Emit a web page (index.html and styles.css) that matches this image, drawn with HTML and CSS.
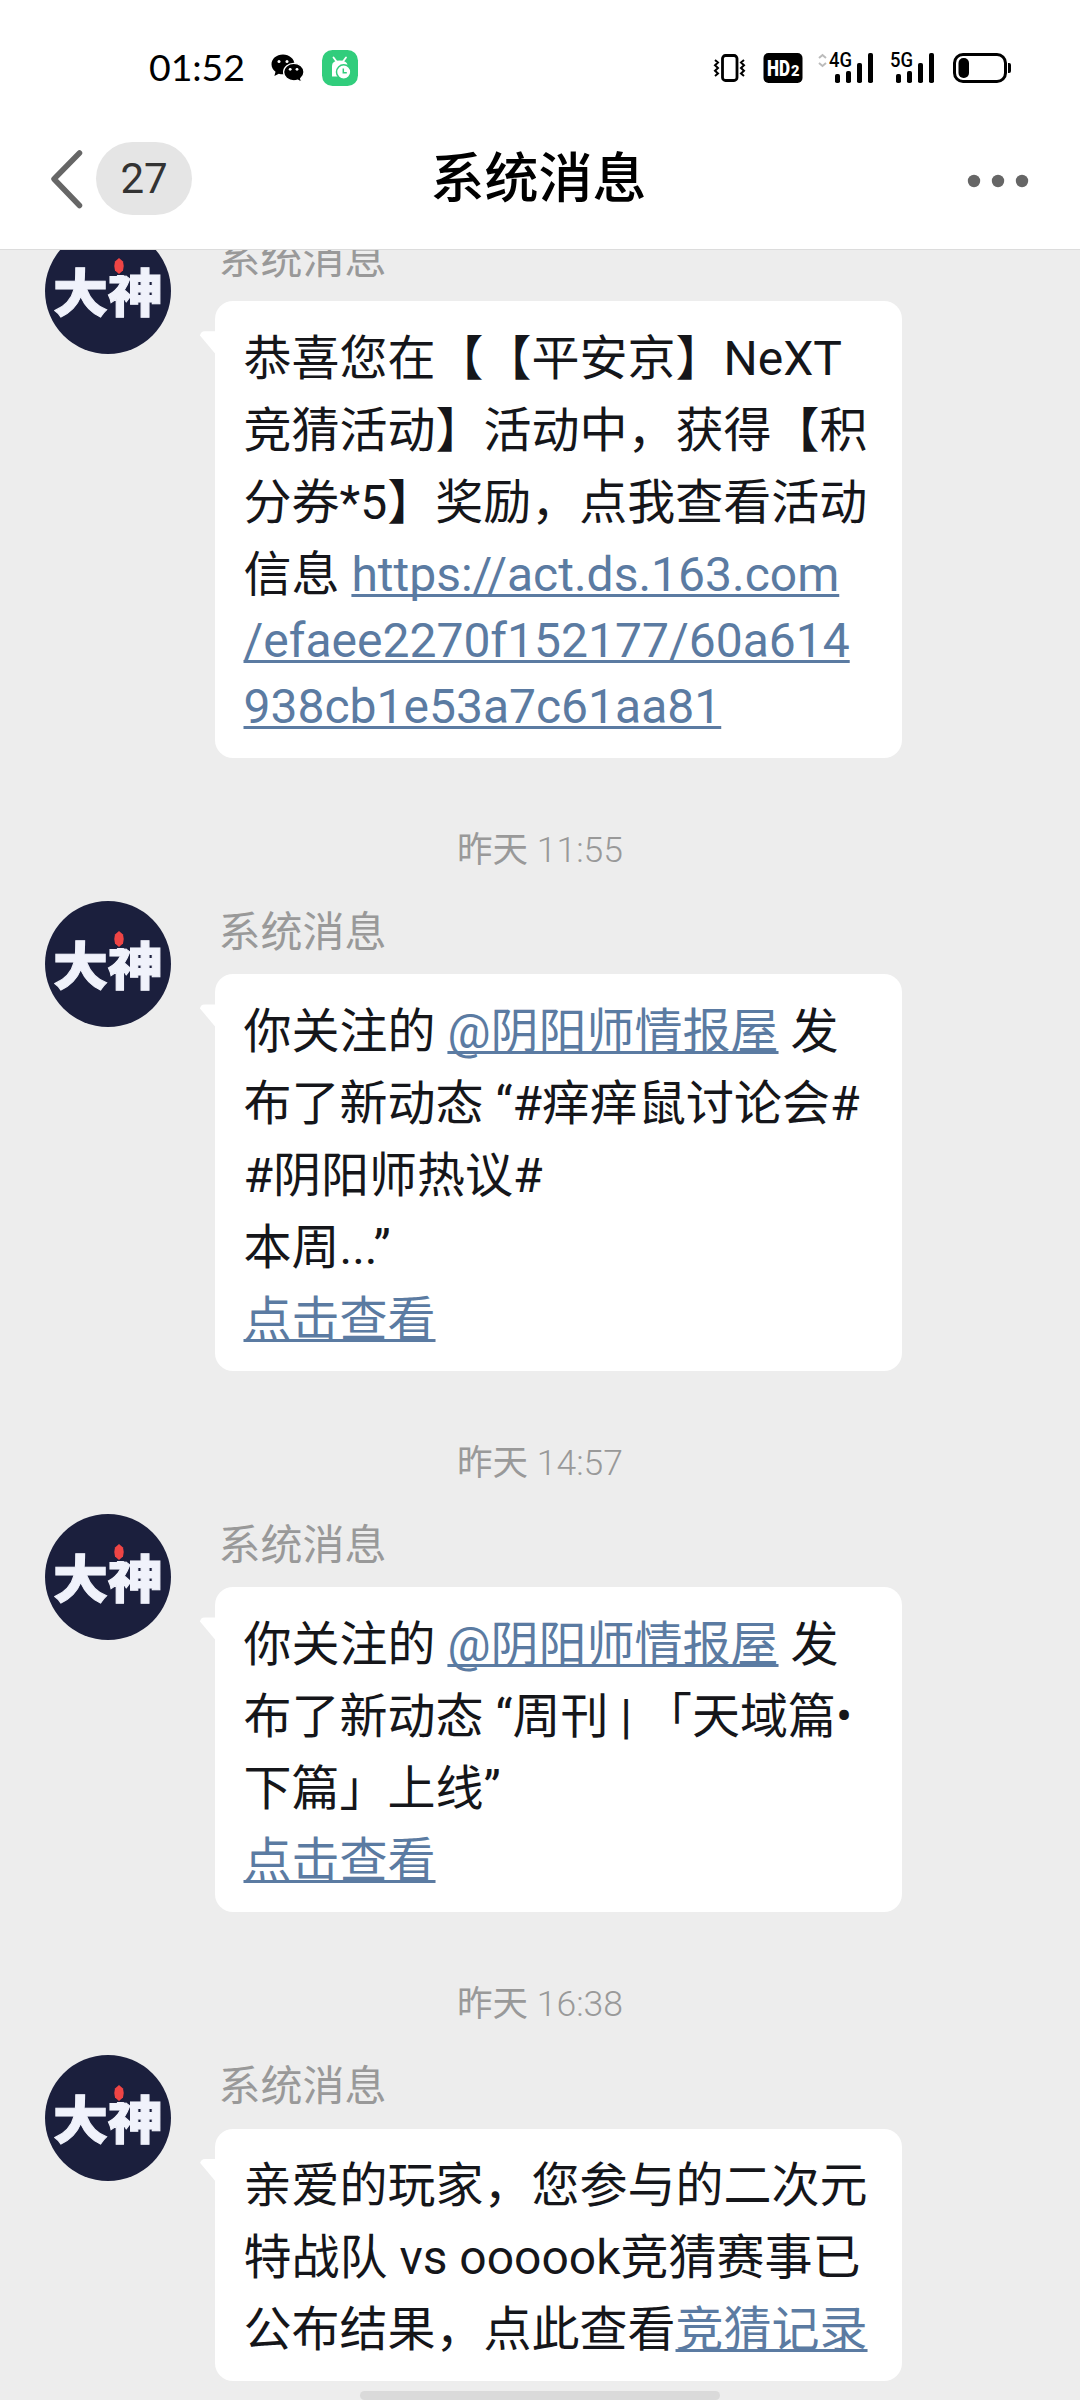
FILE: index.html
```html
<!DOCTYPE html>
<html lang="zh-CN">
<head>
<meta charset="utf-8">
<title>系统消息</title>
<link rel="stylesheet" href="styles.css">
</head>
<body>
<div class="screen">
  <header class="top">
    <div class="status">
      <div class="status-left">
        <span class="clock">01:52</span>
        <svg class="wechat" width="34" height="29" viewBox="0 0 34 29">
          <path d="M12 .5C5.500.500.500 4.800.500 10.300c0 3 1.600 5.700 4 7.500L3.400 22l4.400-2.300c1.300.4 2.700.6 4.200.6 6.300 0 11.500-4.400 11.500-9.900S18.300.500 12 .500z"/>
          <path d="M22.800 9.300c5.600 0 10.200 3.900 10.200 8.800 0 2.600-1.300 4.900-3.300 6.500l.8 3.600-3.700-2c-1.200.4-2.600.6-4 .6-5.600 0-10.200-3.900-10.200-8.700s4.600-8.800 10.200-8.800z" stroke="#fff" stroke-width="1.300"/>
          <g fill="#fff"><circle cx="8" cy="7.600" r="1.500"/><circle cx="16" cy="7.600" r="1.500"/><circle cx="19.200" cy="15.300" r="1.400"/><circle cx="26" cy="15.300" r="1.400"/></g>
        </svg>
        <svg class="droid" width="36" height="36" viewBox="0 0 36 36">
          <rect width="36" height="36" rx="10.500" fill="#31cd7c"/>
          <path d="M11.500 7.500l3 4M24 7.500l-3 4" stroke="#fff" stroke-width="1.800" stroke-linecap="round"/>
          <path d="M10 26.500V16q0-5.500 7.800-5.500T25.500 16v10.500z" fill="#fff"/>
          <circle cx="21.700" cy="22" r="7.200" fill="#fff" stroke="#31cd7c" stroke-width="1.500"/>
          <path d="M21.300 18.500v4.200h3.500" fill="none" stroke="#31cd7c" stroke-width="1.500"/>
        </svg>
      </div>
      <div class="status-right">
        <svg width="34" height="32" viewBox="0 0 34 32" fill="none" stroke="#000">
          <rect x="9.500" y="3.500" width="14.500" height="25" rx="3" stroke-width="2.800"/>
          <path d="M2 8l3 2.500-3 2.800 3 2.700-3 2.700 3 2.800-3 2.500M31 8l-3 2.500 3 2.800-3 2.700 3 2.700-3 2.800 3 2.500" stroke-width="2"/>
        </svg>
        <svg class="hd" width="40" height="32" viewBox="0 0 40 32">
          <rect x=".500" y="1" width="39" height="30" rx="5"/>
          <text class="hd-text" x="4" y="24" textLength="23" lengthAdjust="spacingAndGlyphs">HD</text>
          <text class="hd-num" x="28" y="24" textLength="8.500" lengthAdjust="spacingAndGlyphs">2</text>
        </svg>
        <svg class="net4" width="58" height="32" viewBox="0 0 58 32">
          <path d="M2 6l3.500-3L9 6M2 11l3.500 3L9 11" fill="none" stroke="#bbb" stroke-width="2"/>
          <text class="net-text" x="12" y="15" textLength="23" lengthAdjust="spacingAndGlyphs">4G</text>
          <rect x="18" y="22" width="5" height="9" rx="1.800"/><rect x="29" y="19" width="5" height="12" rx="1.800"/><rect x="40" y="11" width="5" height="20" rx="1.800"/><rect x="51" y="1" width="5" height="30" rx="1.800"/>
        </svg>
        <svg class="net5" width="46" height="32" viewBox="12 0 46 32">
          <text class="net-text" x="12" y="15" textLength="23" lengthAdjust="spacingAndGlyphs">5G</text>
          <rect x="18" y="22" width="5" height="9" rx="1.800"/><rect x="29" y="19" width="5" height="12" rx="1.800"/><rect x="40" y="11" width="5" height="20" rx="1.800"/><rect x="51" y="1" width="5" height="30" rx="1.800"/>
        </svg>
        <svg class="battery" width="59" height="32" viewBox="0 0 59 32">
          <rect x="1.500" y="2.500" width="51" height="27" rx="8.500" fill="none" stroke="#000" stroke-width="3"/>
          <rect x="5.500" y="6" width="10.500" height="20" rx="5"/>
          <path d="M55 11h1.200q1.800 0 1.800 2v6q0 2-1.800 2H55z"/>
        </svg>
      </div>
    </div>
    <div class="navbar">
      <div class="back">
        <svg width="36" height="62" viewBox="0 0 36 62" fill="none" stroke="#666" stroke-width="5.500" stroke-linecap="round" stroke-linejoin="round"><path d="M31.500 5L6 31l25.500 26.500"/></svg>
        <span class="count">27</span>
      </div>
      <h1 class="title">系统消息</h1>
      <svg class="more" width="62" height="14" viewBox="0 0 62 14" fill="#666"><circle cx="7" cy="7" r="6.200"/><circle cx="31" cy="7" r="6.200"/><circle cx="55" cy="7" r="6.200"/></svg>
    </div>
  </header>
  <main class="chat">
    <div class="list">
      <article class="message">
        <svg class="avatar" viewBox="0 0 126 126">
          <circle cx="63" cy="63" r="63" fill="#1b1f3d"/>
          <text class="logo-text" x="8" y="84" textLength="110" lengthAdjust="spacingAndGlyphs">大神</text>
          <path d="M64 32h20v15h-20z" fill="#1b1f3d"/>
          <path d="M74 30l4 3.500q1.500 4.500 0 9l-4 3.500-4-3.500q-1.500-4.500 0-9z" fill="#ef4545"/>
        </svg>
        <div class="content">
          <div class="name">系统消息</div>
          <div class="bubble">
            <div class="line">恭喜您在【【平安京】NeXT</div>
            <div class="line">竞猜活动】活动中，获得【积</div>
            <div class="line">分券*5】奖励，点我查看活动</div>
            <div class="line">信息 <a>https://act.ds.163.com</a></div>
            <div class="line line-latin"><a>/efaee2270f152177/60a614</a></div>
            <div class="line line-latin"><a>938cb1e53a7c61aa81</a></div>
          </div>
        </div>
      </article>
      <div class="time">昨天 <span>11:55</span></div>
      <article class="message">
        <svg class="avatar" viewBox="0 0 126 126">
          <circle cx="63" cy="63" r="63" fill="#1b1f3d"/>
          <text class="logo-text" x="8" y="84" textLength="110" lengthAdjust="spacingAndGlyphs">大神</text>
          <path d="M64 32h20v15h-20z" fill="#1b1f3d"/>
          <path d="M74 30l4 3.500q1.500 4.500 0 9l-4 3.500-4-3.500q-1.500-4.500 0-9z" fill="#ef4545"/>
        </svg>
        <div class="content">
          <div class="name">系统消息</div>
          <div class="bubble">
            <div class="line">你关注的 <a>@阴阳师情报屋</a> 发</div>
            <div class="line">布了新动态 “#痒痒鼠讨论会#</div>
            <div class="line">#阴阳师热议#</div>
            <div class="line">本周...”</div>
            <div class="line"><a>点击查看</a></div>
          </div>
        </div>
      </article>
      <div class="time">昨天 <span>14:57</span></div>
      <article class="message">
        <svg class="avatar" viewBox="0 0 126 126">
          <circle cx="63" cy="63" r="63" fill="#1b1f3d"/>
          <text class="logo-text" x="8" y="84" textLength="110" lengthAdjust="spacingAndGlyphs">大神</text>
          <path d="M64 32h20v15h-20z" fill="#1b1f3d"/>
          <path d="M74 30l4 3.500q1.500 4.500 0 9l-4 3.500-4-3.500q-1.500-4.500 0-9z" fill="#ef4545"/>
        </svg>
        <div class="content">
          <div class="name">系统消息</div>
          <div class="bubble">
            <div class="line">你关注的 <a>@阴阳师情报屋</a> 发</div>
            <div class="line">布了新动态 “周刊 | 「天域篇•</div>
            <div class="line">下篇」上线”</div>
            <div class="line"><a>点击查看</a></div>
          </div>
        </div>
      </article>
      <div class="time">昨天 <span>16:38</span></div>
      <article class="message">
        <svg class="avatar" viewBox="0 0 126 126">
          <circle cx="63" cy="63" r="63" fill="#1b1f3d"/>
          <text class="logo-text" x="8" y="84" textLength="110" lengthAdjust="spacingAndGlyphs">大神</text>
          <path d="M64 32h20v15h-20z" fill="#1b1f3d"/>
          <path d="M74 30l4 3.500q1.500 4.500 0 9l-4 3.500-4-3.500q-1.500-4.500 0-9z" fill="#ef4545"/>
        </svg>
        <div class="content">
          <div class="name">系统消息</div>
          <div class="bubble">
            <div class="line">亲爱的玩家，您参与的二次元</div>
            <div class="line">特战队 vs oooook竞猜赛事已</div>
            <div class="line">公布结果，点此查看<a>竞猜记录</a></div>
          </div>
        </div>
      </article>
    </div>
    <div class="home-bar"></div>
  </main>
</div>
</body>
</html>
```
FILE: styles.css
```css
* { box-sizing: border-box; }
body {
  margin: 0;
  font-family: Roboto, "Noto Sans CJK SC", sans-serif;
  background: #ededed;
  text-spacing-trim: space-all;
}
svg { display: block; flex: none; overflow: visible; }

.screen {
  width: 1080px;
  height: 2400px;
  display: flex;
  flex-direction: column;
  overflow: hidden;
}

.top {
  height: 250px;
  flex: none;
  background: #fff;
  border-bottom: 1px solid #dcdcdc;
}
.status {
  height: 108px;
  padding: 28px 68px 0 149px;
  display: flex;
  justify-content: space-between;
}
.status-left, .status-right { display: flex; align-items: center; height: 80px; }
.clock {
  width: 122px;
  font: 400 37.500px/78px Lato, sans-serif;
  letter-spacing: -0.1px;
  padding-bottom: 2px;
}
.droid { margin-left: 17px; }
.hd { margin-left: 16px; }
.net4 { margin-left: 14px; }
.net5 { margin-left: 15px; }
.battery { margin-left: 17px; }
.hd-text { font: 900 22px Roboto, sans-serif; fill: #fff; }
.hd-num { font: 900 15px Roboto, sans-serif; fill: #fff; }
.net-text { font: 500 20px Roboto, sans-serif; }

.navbar {
  height: 141px;
  padding: 0 51px 0 48px;
  display: grid;
  grid-template-columns: 1fr auto 1fr;
  align-items: center;
}
.back { display: flex; align-items: center; gap: 12px; }
.count {
  width: 96px;
  height: 73px;
  border-radius: 37px;
  background: #e5e5e5;
  color: #333;
  font-size: 42px;
  line-height: 73px;
  text-align: center;
}
.title {
  margin: 0;
  padding-top: 3px;
  font-size: 54px;
  line-height: 80px;
  font-weight: 500;
  color: #000;
}
.more { justify-self: end; margin-top: 5px; }

.chat {
  position: relative;
  flex: 1;
  overflow: hidden;
  background: #ededed;
}
.list { margin-top: -22.300px; }
.message { display: flex; padding-left: 45px; }
.avatar { width: 126px; height: 126px; }
.logo-text {
  font: 900 51px "Noto Sans CJK SC", sans-serif;
  fill: #f0f2fb;
  stroke: #f0f2fb;
  stroke-width: 1px;
}
.content { margin-left: 44px; }
.name {
  height: 73.600px;
  padding: 2px 0 0 3.500px;
  font-size: 42px;
  line-height: 60px;
  color: #999;
}
.bubble {
  position: relative;
  width: 687px;
  padding: 21.500px 28.500px 15px;
  border-radius: 18px;
  background: #fff;
  color: #15161a;
}
.bubble::before {
  content: "";
  position: absolute;
  left: -15px;
  top: 30px;
  width: 16px;
  height: 23px;
  background: #fff;
  border-top-left-radius: 5px;
  clip-path: polygon(0 0, 100% 0, 100% 100%, 94% 96%, 0 18%);
}
.line {
  font-size: 48px;
  line-height: 72px;
  white-space: nowrap;
}
.line-latin { line-height: 66px; }
.line:not(.line-latin) + .line-latin { margin-top: -2.500px; }
.line-latin:last-child { padding-bottom: 2.500px; }
.line a {
  color: #5b7ba2;
  text-decoration: underline;
  text-decoration-thickness: 2.500px;
  text-underline-offset: 3px;
  text-decoration-skip-ink: none;
}
.time {
  height: 143px;
  padding-top: 62px;
  font-size: 35.500px;
  line-height: 60px;
  text-align: center;
  color: #999;
}
.time span { font-weight: 300; }
.home-bar {
  position: absolute;
  left: 360px;
  bottom: 0;
  width: 360px;
  height: 9px;
  border-radius: 4.500px;
  background: #dadada;
}
```
